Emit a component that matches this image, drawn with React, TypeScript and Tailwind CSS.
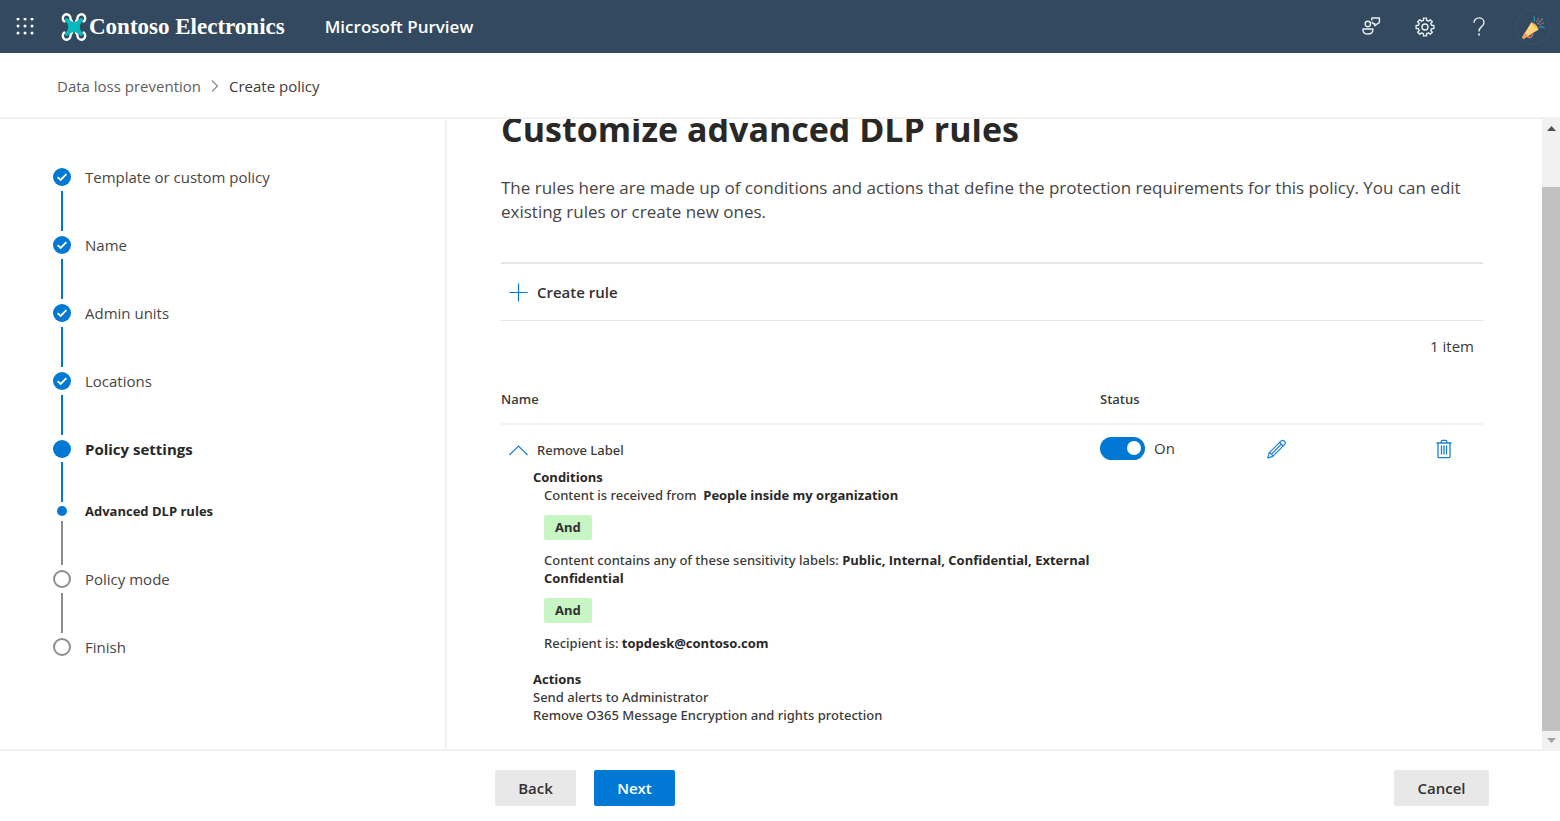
import React from "react";

type StepState = "done" | "current" | "sub" | "todo";

const steps: { label: string; state: StepState }[] = [
  { label: "Template or custom policy", state: "done" },
  { label: "Name", state: "done" },
  { label: "Admin units", state: "done" },
  { label: "Locations", state: "done" },
  { label: "Policy settings", state: "current" },
  { label: "Advanced DLP rules", state: "sub" },
  { label: "Policy mode", state: "todo" },
  { label: "Finish", state: "todo" },
];

const labelStyles: Record<StepState, string> = {
  done: "text-[15px] text-[#484644]",
  current: "text-[15px] font-bold text-[#292827]",
  sub: "text-[13px] font-bold text-[#292827]",
  todo: "text-[15px] text-[#484644]",
};

function gearPath(teeth: number, outer: number, inner: number, c: number) {
  const step = (Math.PI * 2) / teeth;
  const points: string[] = [];
  for (let i = 0; i < teeth; i++) {
    const a = i * step - Math.PI / 2;
    const corners: [number, number][] = [
      [-0.3, inner],
      [-0.22, outer],
      [0.22, outer],
      [0.3, inner],
    ];
    corners.forEach(([t, r]) => {
      const x = c + r * Math.cos(a + t * step);
      const y = c + r * Math.sin(a + t * step);
      points.push(x.toFixed(2) + " " + y.toFixed(2));
    });
  }
  return "M" + points.join("L") + "Z";
}

const gear = gearPath(8, 9, 6.8, 10);

function WaffleIcon() {
  return (
    <svg className="size-[18px]" viewBox="0 0 18 18" fill="#fff" aria-hidden="true">
      {[2, 9, 16].map((y) => [2, 9, 16].map((x) => <circle key={x + "-" + y} cx={x} cy={y - 1} r="1.5" />))}
    </svg>
  );
}

function DroneLogo() {
  return (
    <svg className="h-7 w-[26px]" viewBox="0 0 26 28" fill="none" aria-hidden="true">
      <g stroke="#fff" strokeWidth="2.4" strokeLinecap="round">
        <path d="M3.4 8.4A3.9 3.9 0 1 1 9.4 4.2Q9.2 6.6 11 8.4" />
        <path d="M22.6 8.4A3.9 3.9 0 1 0 16.6 4.2Q16.8 6.6 15 8.4" />
        <path d="M3.4 19.6A3.9 3.9 0 1 0 9.4 23.8Q9.2 21.4 11 19.6" />
        <path d="M22.6 19.6A3.9 3.9 0 1 1 16.6 23.8Q16.8 21.4 15 19.6" />
      </g>
      <path
        d="M5.6 5.6L10.2 9Q13 10.4 15.8 9L20.4 5.6L21.4 6.6L18.6 11.2Q17.4 14 18.6 16.8L21.4 21.4L20.4 22.4L15.8 19Q13 17.6 10.2 19L5.6 22.4L4.6 21.4L7.4 16.8Q8.6 14 7.4 11.2L4.6 6.6Z"
        fill="#06b9bd"
        stroke="#06b9bd"
        strokeWidth="1.4"
        strokeLinejoin="round"
      />
    </svg>
  );
}

function FeedbackIcon() {
  return (
    <svg className="size-5" viewBox="0 0 20 20" fill="none" stroke="#e8f0f0" strokeWidth="1.4" strokeLinejoin="round" aria-hidden="true">
      <circle cx="6.8" cy="7" r="2.7" />
      <path d="M2 12H11.8V13C11.8 15.6 10 17 6.9 17S2 15.6 2 13Z" />
      <path d="M10.8 3.4V1H18.4V4.6Q18.4 6.6 16.4 6.8L13.8 8.8V6.8H12.4L10.8 5" />
    </svg>
  );
}

function GearIcon() {
  return (
    <svg className="size-5" viewBox="0 0 20 20" fill="none" stroke="#e8f0f0" strokeWidth="1.4" strokeLinejoin="round" aria-hidden="true">
      <path d={gear} />
      <circle cx="10" cy="10" r="3" />
    </svg>
  );
}

function HelpIcon() {
  return (
    <svg className="size-5" viewBox="0 0 20 20" fill="none" stroke="#e8f0f0" strokeWidth="1.4" aria-hidden="true">
      <path d="M5 5.8C5 2.8 7.2 0.9 10 0.9S15 2.8 15 5.4C15 7.6 13.8 8.6 12.4 9.8S10 11.8 10 14.4" />
      <path d="M10 16.4V18.4" strokeWidth="1.8" />
    </svg>
  );
}

function PartyIcon() {
  return (
    <svg className="size-9" viewBox="0 0 36 36" fill="none" aria-hidden="true">
      <circle cx="18" cy="18" r="17.4" stroke="#3c566f" strokeWidth="0.8" />
      <path d="M11.5 26.5Q15 30 16.5 27.5L18 25" stroke="#e2895a" strokeWidth="1.3" />
      <path d="M16.4 13.2L23.6 20.4L8.6 30L7 28.6Z" fill="#ffd67d" />
      <path d="M16.4 13.2Q21.6 14.6 23.6 20.4Q18.6 18.8 16.4 13.2Z" fill="#fbb950" />
      <path d="M9.6 23.6L13 27.2L8.6 30L7 28.6Z" fill="#f39a5b" />
      <path d="M19 13Q20.4 10 18.6 6.8M24 18.4Q27 16.8 29.6 19" stroke="#1f97a5" strokeWidth="1.3" />
      <path d="M21.4 13.6L23.8 8.6M24.4 16L29 13.6" stroke="#a04d97" strokeWidth="1.3" />
      <path d="M22.6 15.4L27.6 9.6" stroke="#69b36b" strokeWidth="1.3" strokeDasharray="2 1" />
    </svg>
  );
}

function PencilIcon() {
  return (
    <svg className="size-5" viewBox="0 0 20 20" fill="none" stroke="#1a7fd4" strokeWidth="1.2" strokeLinejoin="round" aria-hidden="true">
      <path d="M0.8 18.8L2.2 13.8L14.2 1.9Q15.8 0.6 17.4 2.2T17.7 5.4L5.8 17.4Z" />
      <path d="M12.6 3.5L16.1 7M2.2 13.8Q5.2 14.4 5.8 17.4M4.2 15.4L14.4 5.2" />
    </svg>
  );
}

function TrashIcon() {
  return (
    <svg className="h-5 w-4" viewBox="0 0 16 20" fill="none" stroke="#1a7fd4" strokeWidth="1.3" aria-hidden="true">
      <path d="M0.5 4H15.5M5.2 4V2.6Q5.2 1.4 6.4 1.4H9.6Q10.8 1.4 10.8 2.6V4" />
      <path d="M2 4V17.4Q2 18.6 3.2 18.6H12.8Q14 18.6 14 17.4V4" />
      <path d="M5.5 6.4V15.4M8 6.4V15.4M10.5 6.4V15.4" />
    </svg>
  );
}

function StepMarker({ state }: { state: StepState }) {
  if (state === "done")
    return (
      <svg className="size-[18px]" viewBox="0 0 18 18" aria-hidden="true">
        <circle cx="9" cy="9" r="9" fill="#0078d4" />
        <path d="M4.6 9.2L7.6 12L13.4 6.2" fill="none" stroke="#fff" strokeWidth="1.8" />
      </svg>
    );
  if (state === "current") return <span className="size-[18px] rounded-full bg-[#0078d4]" />;
  if (state === "sub") return <span className="size-[10px] rounded-full bg-[#0078d4]" />;
  return <span className="size-[18px] rounded-full border-2 border-[#8f8d8b]" />;
}

function Step({ label, state, last }: { label: string; state: StepState; last: boolean }) {
  const blue = state === "done" || state === "current";
  return (
    <li className="flex gap-[14px]">
      <div
        className={`flex w-[18px] shrink-0 flex-col items-center ${state === "current" ? "gap-1 pb-1" : "gap-[5px] pb-[5px]"}`}
      >
        <StepMarker state={state} />
        {!last && (
          <span
            className={`w-[2px] ${state === "sub" ? "h-11" : "h-10"} ${blue ? "bg-[#0078d4]" : "bg-[#8f8d8b]"}`}
          />
        )}
      </div>
      <span className={`${state === "sub" ? "leading-[10px]" : "leading-[18px]"} ${labelStyles[state]}`}>{label}</span>
    </li>
  );
}

function AndBadge() {
  return (
    <div className="my-[11px] flex">
      <span className="rounded-[2px] bg-[#c7f5c4] px-[11px] text-[13px] leading-[25px] font-bold text-[#323130]">And</span>
    </div>
  );
}

function Strong({ children }: { children: React.ReactNode }) {
  return <b className="font-['Open_Sans',sans-serif] font-bold text-[#292827]">{children}</b>;
}

export default function App() {
  const [enabled, setEnabled] = React.useState(true);
  return (
    <div className="flex h-screen flex-col bg-white font-['Open_Sans','Noto_Sans',sans-serif] text-[#3b3a39]">
      <header className="flex h-[53px] shrink-0 items-center bg-[#32495f] pr-[9px] pl-4 text-white">
        <button type="button" aria-label="App launcher" className="mr-[27px]">
          <WaffleIcon />
        </button>
        <a href="#home" className="mr-10 flex items-center gap-[2px]">
          <DroneLogo />
          <span className="font-['Liberation_Serif',serif] text-[23px] leading-7 font-bold">Contoso Electronics</span>
        </a>
        <span className="grow text-[17px] font-semibold">Microsoft Purview</span>
        <div className="flex items-center">
          <button type="button" aria-label="Feedback" className="mr-[34px]">
            <FeedbackIcon />
          </button>
          <button type="button" aria-label="Settings" className="mr-[34px]">
            <GearIcon />
          </button>
          <button type="button" aria-label="Help" className="mr-[26px]">
            <HelpIcon />
          </button>
          <button type="button" aria-label="Account">
            <PartyIcon />
          </button>
        </div>
      </header>

      <nav
        aria-label="Breadcrumb"
        className="flex h-[66px] shrink-0 items-center gap-[10px] border-b-2 border-[#f3f2f1] pt-[2px] pl-[57px] text-[15px]"
      >
        <a href="#dlp" className="text-[#605e5c]">
          Data loss prevention
        </a>
        <svg className="h-3 w-2" viewBox="0 0 8 12" fill="none" stroke="#8a8886" strokeWidth="1.2" aria-hidden="true">
          <path d="M1 0.5L6.5 6L1 11.5" />
        </svg>
        <span aria-current="page">Create policy</span>
      </nav>

      <div className="flex min-h-0 grow">
        <aside className="w-[447px] shrink-0 border-r-2 border-[#f3f2f1] pt-[49px] pl-[53px]">
          <ol>
            {steps.map((s, i) => (
              <Step key={s.label} label={s.label} state={s.state} last={i === steps.length - 1} />
            ))}
          </ol>
        </aside>

        <main className="min-w-0 grow overflow-hidden pr-[59px] pl-[54px]">
          <h1 className="text-[34px] leading-5 font-bold text-[#292827]">Customize advanced DLP rules</h1>
          <p className="mt-[37px] text-[17px] leading-6 text-[#484644]">
            The rules here are made up of conditions and actions that define the protection requirements for this policy.
            You can edit existing rules or create new ones.
          </p>
          <div className="mt-[38px] flex h-[59px] items-center border-t-2 border-b border-[#e8e7e6] pl-2">
            <button type="button" className="flex items-center gap-[9px] text-[15px] font-semibold text-[#323130]">
              <svg className="size-[19px]" viewBox="0 0 19 19" fill="none" stroke="#0078d4" strokeWidth="1.2" aria-hidden="true">
                <path d="M9.5 0.5V18.5M0.5 9.5H18.5" />
              </svg>
              Create rule
            </button>
          </div>
          <p className="mt-[13px] pr-[9px] text-right text-[15px] leading-6">1 item</p>

          <table className="mt-[17px] w-full table-fixed text-left">
            <colgroup>
              <col className="w-[61%]" />
              <col className="w-[17%]" />
              <col className="w-[17%]" />
              <col className="w-[5%]" />
            </colgroup>
            <thead>
              <tr className="h-[49px] border-b-2 border-[#f3f2f1] text-[13px]">
                <th className="pt-[2px] font-semibold">Name</th>
                <th className="pt-[2px] font-semibold">Status</th>
                <th aria-label="Edit" />
                <th aria-label="Delete" />
              </tr>
            </thead>
            <tbody>
              <tr className="align-top">
                <td className="pt-4 font-['Noto_Sans',sans-serif] text-[13px] leading-[18px] font-medium">
                  <button type="button" aria-expanded="true" className="flex items-center gap-[9px] pl-2 font-medium">
                    <svg className="h-[11px] w-[19px]" viewBox="0 0 19 11" fill="none" stroke="#1a7fd4" strokeWidth="1.2" aria-hidden="true">
                      <path d="M0.5 10L9.5 1L18.5 10" />
                    </svg>
                    Remove Label
                  </button>
                  <div className="pt-[9px] pl-8">
                    <p>
                      <Strong>Conditions</Strong>
                    </p>
                    <div className="pl-[11px]">
                      <p>
                        Content is received from&nbsp; <Strong>People inside my organization</Strong>
                      </p>
                      <AndBadge />
                      <p>
                        Content contains any of these sensitivity labels:{" "}
                        <Strong>Public, Internal, Confidential, External Confidential</Strong>
                      </p>
                      <AndBadge />
                      <p>
                        Recipient is: <Strong>topdesk@contoso.com</Strong>
                      </p>
                    </div>
                    <p className="mt-[18px]">
                      <Strong>Actions</Strong>
                    </p>
                    <p>Send alerts to Administrator</p>
                    <p>Remove O365 Message Encryption and rights protection</p>
                  </div>
                </td>
                <td className="pt-[11px]">
                  <label className="flex items-center gap-[9px] text-[15px] leading-6">
                    <input
                      type="checkbox"
                      role="switch"
                      checked={enabled}
                      onChange={(e) => setEnabled(e.target.checked)}
                      className="peer sr-only"
                    />
                    <span className="flex h-[23px] w-[45px] items-center justify-start rounded-full bg-[#8a8886] px-1 peer-checked:justify-end peer-checked:bg-[#0078d4]">
                      <span className="size-[14px] rounded-full bg-white" />
                    </span>
                    <span>{enabled ? "On" : "Off"}</span>
                  </label>
                </td>
                <td className="pt-[14px]">
                  <button type="button" aria-label="Edit rule" className="block">
                    <PencilIcon />
                  </button>
                </td>
                <td className="pt-[14px] pl-[2px]">
                  <button type="button" aria-label="Delete rule" className="block">
                    <TrashIcon />
                  </button>
                </td>
              </tr>
            </tbody>
          </table>
        </main>

        <div aria-hidden="true" className="flex w-[18px] shrink-0 flex-col items-center bg-[#f1f1f1]">
          <svg className="h-[18px] w-[9px] shrink-0" viewBox="0 0 9 18" fill="#505050">
            <path d="M0 12L4.5 7L9 12Z" />
          </svg>
          <span className="mt-[50px] w-full grow bg-[#c1c1c1]" />
          <svg className="h-[18px] w-[9px] shrink-0" viewBox="0 0 9 18" fill="#a3a3a3">
            <path d="M0 7L4.5 12L9 7Z" />
          </svg>
        </div>
      </div>

      <footer className="flex h-[72px] shrink-0 items-center gap-[18px] border-t-2 border-[#f3f2f1] pt-1 pr-[71px] pl-[495px] text-[15px] font-semibold">
        <button type="button" className="h-9 w-[81px] rounded-[2px] bg-[#e8e8e8] text-[#323130]">
          Back
        </button>
        <button type="button" className="h-9 w-[81px] rounded-[2px] bg-[#0078d4] text-white">
          Next
        </button>
        <button type="button" className="ml-auto h-9 w-[95px] rounded-[2px] bg-[#e8e8e8] text-[#323130]">
          Cancel
        </button>
      </footer>
    </div>
  );
}
